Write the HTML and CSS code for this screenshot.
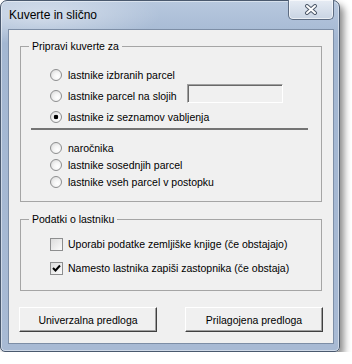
FILE: index.html
```html
<!DOCTYPE html>
<html lang="sl">
<head>
  <meta charset="UTF-8">
  <title>Kuverte in slično</title>
  <link rel="stylesheet" href="styles.css">
</head>
<body>

<div class="window">

  <div class="titlebar">
    <span class="title">Kuverte in slično</span>
    <button class="close-btn" title="Zapri">
      <svg width="14" height="11" viewBox="0 0 14 11">
        <path d="M3 2 L11 9 M11 2 L3 9" stroke="#4f5a6b" stroke-width="4" stroke-linecap="round"/>
        <path d="M3 2 L11 9 M11 2 L3 9" stroke="#fff" stroke-width="2" stroke-linecap="round"/>
      </svg>
    </button>
  </div>

  <div class="client">

    <fieldset class="group group-envelopes">
      <legend>Pripravi kuverte za</legend>
      <label class="opt"><span class="radio"></span>lastnike izbranih parcel</label>
      <div class="opt">
        <label class="opt-label"><span class="radio"></span><span class="opt-text-fixed">lastnike parcel na slojih</span></label>
        <input class="layer-input" type="text">
      </div>
      <label class="opt"><span class="radio checked"></span>lastnike iz seznamov vabljenja</label>
      <div class="separator"></div>
      <label class="opt opt-compact"><span class="radio"></span>naročnika</label>
      <label class="opt opt-compact"><span class="radio"></span>lastnike sosednjih parcel</label>
      <label class="opt opt-compact"><span class="radio"></span>lastnike vseh parcel v postopku</label>
    </fieldset>

    <fieldset class="group group-owner">
      <legend>Podatki o lastniku</legend>
      <label class="opt opt-check"><span class="checkbox"></span>Uporabi podatke zemljiške knjige (če obstajajo)</label>
      <label class="opt opt-check">
        <span class="checkbox">
          <svg width="11" height="11" viewBox="0 0 11 11">
            <path d="M2 5 L4.5 7.5 L9 2.5" fill="none" stroke="#000" stroke-width="2"/>
          </svg>
        </span>Namesto lastnika zapiši zastopnika (če obstaja)</label>
    </fieldset>

    <div class="buttons">
      <button class="btn">Univerzalna predloga</button>
      <button class="btn">Prilagojena predloga</button>
    </div>

  </div>

</div>

</body>
</html>
```

FILE: styles.css
```css
* {
  box-sizing: border-box;
}

body {
  margin: 0;
  font-family: "Liberation Sans", Arial, sans-serif;
  font-size: 10.5px;
  color: #000;
  background: #fff;
}

.window {
  width: 340px;
  height: 352px;
  display: flex;
  flex-direction: column;
  border: 1px solid #4a596e;
  border-radius: 7px 7px 5px 5px;
  background:
    radial-gradient(ellipse 120px 30px at 40px 14px, rgba(255, 255, 255, 0.45), rgba(255, 255, 255, 0)),
    linear-gradient(#b7c8de, #a3b7d2 40px, #a8bad4);
  box-shadow: inset 0 0 0 1px rgba(255, 255, 255, 0.45), 4px 5px 7px rgba(0, 0, 0, 0.45);
}

.titlebar {
  height: 28px;
  display: flex;
  justify-content: space-between;
  align-items: flex-start;
}

.title {
  font-size: 12px;
  line-height: 14px;
  padding: 7px 0 0 8px;
}

.close-btn {
  width: 46px;
  height: 20px;
  margin: -1px 5px 0 0;
  padding: 0;
  display: flex;
  align-items: center;
  justify-content: center;
  border: 1px solid #5d6c82;
  border-top: none;
  border-radius: 0 0 5px 5px;
  background: linear-gradient(#e6ecf4, #c9d4e3);
  box-shadow: inset 0 0 0 1px rgba(255, 255, 255, 0.6);
}

.client {
  flex: 1;
  margin: 0 5px 7px 7px;
  padding: 10px 11px 0 11px;
  background: #f0f0f0;
  border: 1px solid #7d8ea6;
}

.group {
  margin: 0;
  padding: 11px 0 11px 0;
  min-width: 0;
  border: 1px solid #a5a5a5;
}

.group legend {
  margin-left: 8px;
  padding: 0 3px;
  line-height: 13px;
}

.group-owner {
  margin-top: 11px;
  padding: 6px 0 10px 0;
}

.opt {
  display: flex;
  align-items: center;
  height: 21px;
  padding-left: 29px;
}

.opt-compact {
  height: 17px;
}

.opt-check {
  height: 24px;
}

.opt-label {
  display: flex;
  align-items: center;
}

.opt-text-fixed {
  width: 119px;
}

.radio {
  flex: none;
  width: 12px;
  height: 12px;
  margin-right: 6px;
  border: 1px solid #8d8e8f;
  border-radius: 50%;
  background: radial-gradient(circle at 65% 65%, #ffffff, #f4f4f4 40%, #d3d3d3);
}

.radio.checked {
  background:
    radial-gradient(circle, #000 0 2px, rgba(0, 0, 0, 0) 2.6px),
    radial-gradient(circle at 65% 65%, #ffffff, #f4f4f4 40%, #d3d3d3);
}

.checkbox {
  flex: none;
  width: 13px;
  height: 13px;
  margin-right: 5px;
  display: flex;
  align-items: center;
  justify-content: center;
  border: 1px solid #8d8e8f;
  background: linear-gradient(135deg, #dcdcdc, #fbfbfb);
}

.layer-input {
  align-self: flex-start;
  margin-top: -1px;
  width: 96px;
  height: 19px;
  padding: 0;
  border: 1px solid;
  border-color: #a0a0a0 #ffffff #ffffff #a0a0a0;
  box-shadow: inset 1px 1px 0 #696969;
  background: #f0f0f0;
}

.separator {
  height: 2px;
  margin: 1px 13px 9px 10px;
  background: #747474;
}

.buttons {
  display: flex;
  justify-content: space-between;
  margin: 16px -1px 0 -1px;
}

.btn {
  width: 138px;
  height: 25px;
  padding: 0;
  font: inherit;
  color: #000;
  background: #f0f0f0;
  border: 1px solid;
  border-color: #ffffff #404040 #404040 #ffffff;
  box-shadow: inset -1px -1px 0 #a0a0a0;
}
```
